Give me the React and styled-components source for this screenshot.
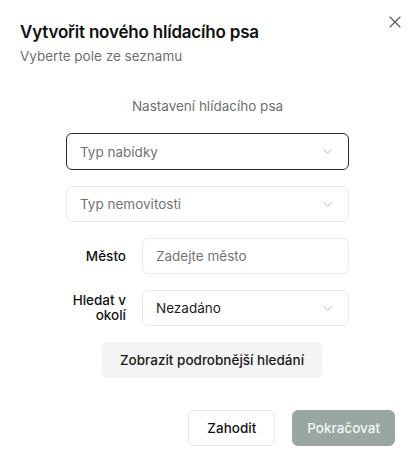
import React from "react";
import styled, { createGlobalStyle } from "styled-components";
import { ChevronDown, X } from "lucide-react";

const GlobalStyle = createGlobalStyle`
  * { box-sizing: border-box; }
  body {
    margin: 0;
    background: #ffffff;
    font-family: Inter, "Noto Sans", "Liberation Sans", sans-serif;
    color: #141414;
  }
`;

const Dialog = styled.div`
  width: 414px;
  height: 467px;
  padding: 20px 19px 21px 20px;
  display: flex;
  flex-direction: column;
  background: #ffffff;
`;

const Header = styled.div`
  display: flex;
  justify-content: space-between;
  align-items: flex-start;
`;

const Title = styled.h2`
  margin: 0;
  font-size: 17px;
  line-height: 24px;
  font-weight: 600;
  letter-spacing: -0.2px;
  color: #111111;
`;

const Subtitle = styled.p`
  margin: 2px 0 0;
  font-size: 13.5px;
  line-height: 20px;
  color: #6f6f6f;
`;

const CloseButton = styled.button`
  border: none;
  background: none;
  padding: 0;
  margin: -8px -10px 0 0;
  color: #555555;
  display: flex;
  cursor: pointer;
`;

const Form = styled.div`
  width: 283px;
  margin: 30px auto 0;
  display: flex;
  flex-direction: column;
  gap: 16px;
`;

const SectionTitle = styled.div`
  text-align: center;
  font-size: 13.5px;
  line-height: 20px;
  color: #6f6f6f;
  margin-bottom: 1px;
`;

const SelectBox = styled.div`
  height: ${(p) => (p.$active ? 37 : 36)}px;
  flex: 1 1 auto;
  min-width: 0;
  display: flex;
  align-items: center;
  justify-content: space-between;
  padding: 0 13px 0 13px;
  border: 1px solid ${(p) => (p.$active ? "#2a2a2a" : "#ebebeb")};
  border-radius: 6px;
  font-size: 13.5px;
  color: ${(p) => (p.$filled ? "#1c1c1c" : "#737373")};
  background: #ffffff;
`;

const Row = styled.div`
  display: flex;
  align-items: center;
  gap: 16px;
`;

const Label = styled.div`
  width: 60px;
  flex: none;
  text-align: right;
  font-size: 13.5px;
  line-height: 15px;
  font-weight: 500;
  color: #141414;
`;

const DetailButton = styled.button`
  align-self: flex-start;
  margin-left: 36px;
  height: 36px;
  width: 220px;
  border: none;
  border-radius: 6px;
  background: #f4f4f4;
  font-family: inherit;
  font-size: 13.5px;
  font-weight: 500;
  color: #1a1a1a;
  cursor: pointer;
`;

const Footer = styled.div`
  margin-top: auto;
  display: flex;
  justify-content: flex-end;
  gap: 17px;
`;

const FooterButton = styled.button`
  height: 36px;
  padding: 0 ${(p) => (p.$primary ? 14 : 18)}px;
  border-radius: 6px;
  border: 1px solid ${(p) => (p.$primary ? "#9aa6a2" : "#e8e8e8")};
  background: ${(p) => (p.$primary ? "#9aa6a2" : "#ffffff")};
  color: ${(p) => (p.$primary ? "#f3f6f5" : "#141414")};
  font-family: inherit;
  font-size: 13.5px;
  font-weight: 500;
  cursor: pointer;
`;

const Select = ({ children, active, filled }) => (
  <SelectBox $active={active} $filled={filled}>
    <span>{children}</span>
    <ChevronDown size={15} strokeWidth={1.4} color="#b3b3b3" />
  </SelectBox>
);

export default function App() {
  return (
    <>
      <GlobalStyle />
      <Dialog>
        <Header>
          <div>
            <Title>Vytvořit nového hlídacího psa</Title>
            <Subtitle>Vyberte pole ze seznamu</Subtitle>
          </div>
          <CloseButton aria-label="Zavřít">
            <X size={20} strokeWidth={1.3} />
          </CloseButton>
        </Header>

        <Form>
          <SectionTitle>Nastavení hlídacího psa</SectionTitle>
          <Select active>Typ nabídky</Select>
          <Select>Typ nemovitosti</Select>
          <Row>
            <Label>Město</Label>
            <SelectBox>Zadejte město</SelectBox>
          </Row>
          <Row>
            <Label>Hledat v okolí</Label>
            <Select filled>Nezadáno</Select>
          </Row>
          <DetailButton>Zobrazit podrobnější hledání</DetailButton>
        </Form>

        <Footer>
          <FooterButton>Zahodit</FooterButton>
          <FooterButton $primary>Pokračovat</FooterButton>
        </Footer>
      </Dialog>
    </>
  );
}
